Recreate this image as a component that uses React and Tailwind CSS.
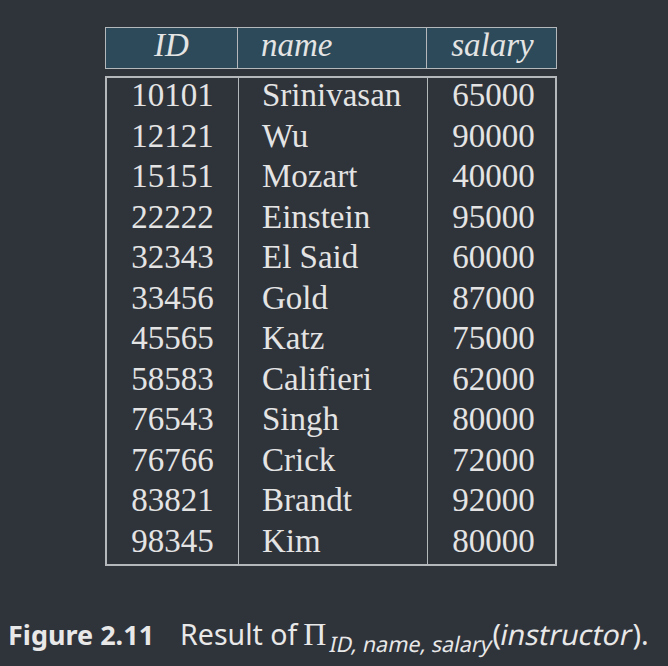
import React from 'react';

const rows = [
  ['10101', 'Srinivasan', '65000'],
  ['12121', 'Wu', '90000'],
  ['15151', 'Mozart', '40000'],
  ['22222', 'Einstein', '95000'],
  ['32343', 'El Said', '60000'],
  ['33456', 'Gold', '87000'],
  ['45565', 'Katz', '75000'],
  ['58583', 'Califieri', '62000'],
  ['76543', 'Singh', '80000'],
  ['76766', 'Crick', '72000'],
  ['83821', 'Brandt', '92000'],
  ['98345', 'Kim', '80000'],
];

export default function App() {
  return (
    <div className="w-[668px] h-[666px] bg-[#2f333a] text-[#e4e4e4] overflow-hidden">
      {/* tabla */}
      <div className="pt-[27px] pl-[105px] w-[557px] font-['Liberation_Serif',serif] text-[33px]">
        <div className="grid grid-cols-[132px_189px_131px] h-[42px] bg-[#2c4a59] border border-[#b5b8bb] italic leading-[34px]">
          <div className="text-center border-r border-[#b5b8bb]">ID</div>
          <div className="pl-[23px] border-r border-[#b5b8bb]">name</div>
          <div className="text-center">salary</div>
        </div>
        <div className="mt-[7px] grid grid-cols-[132px_189px_131px] border-2 border-[#b5b8bb] h-[490px]">
          <div className="border-r border-[#b5b8bb] text-center">
            {rows.map((r) => (
              <div key={r[0] + r[1]} className="h-[40.5px] leading-[35px]">{r[0]}</div>
            ))}
          </div>
          <div className="border-r border-[#b5b8bb] pl-[23px]">
            {rows.map((r) => (
              <div key={r[1]} className="h-[40.5px] leading-[35px]">{r[1]}</div>
            ))}
          </div>
          <div className="text-center">
            {rows.map((r) => (
              <div key={r[1] + r[2]} className="h-[40.5px] leading-[35px]">{r[2]}</div>
            ))}
          </div>
        </div>
      </div>

      {/* pie de figura */}
      <div className="mt-[44px] pl-[8px] flex items-baseline whitespace-nowrap font-['Noto_Sans',sans-serif] text-[28.5px] text-[#e8e8e8]">
        <span className="font-bold text-[27px]">Figure 2.11</span>
        <span className="ml-[26px]">Result of</span>
        <span className="ml-[6px] font-['Liberation_Serif',serif] text-[32px]">Π</span>
        <span className="inline-block -skew-x-12 text-[21.5px] relative top-[7px] ml-[4px]">ID, name, salary</span>
        <span>(<span className="inline-block -skew-x-12">instructor</span>).</span>
      </div>
    </div>
  );
}
